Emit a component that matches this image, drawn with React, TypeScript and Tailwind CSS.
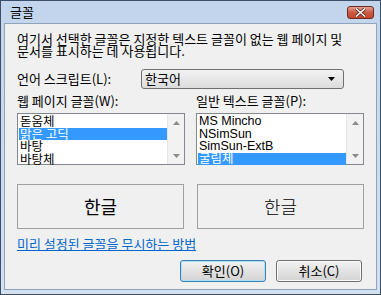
import React from "react";

const KR = { fontFamily: '"Noto Sans CJK KR", "Liberation Sans", sans-serif' };

function ScrollCol() {
  return (
    <div className="flex w-[17px] flex-col justify-between bg-[#f2f2f2] border-l border-[#e6e6e6]">
      <div className="flex h-[17px] items-center justify-center">
        <svg width="7" height="4" viewBox="0 0 7 4"><path d="M3.5 0 L7 4 L0 4 Z" fill="#8a8a8a" /></svg>
      </div>
      <div className="flex h-[17px] items-center justify-center">
        <svg width="7" height="4" viewBox="0 0 7 4"><path d="M0 0 L7 0 L3.5 4 Z" fill="#8a8a8a" /></svg>
      </div>
    </div>
  );
}

function ListBox({ items, selected }: { items: string[]; selected: number }) {
  return (
    <div className="flex h-[52px] w-[168px] border border-[#828790] bg-white">
      <div className="flex flex-1 flex-col pl-[1px] pt-[1px]">
        {items.map((t, i) => (
          <div
            key={t}
            className={
              "h-[12.5px] pl-[1px] text-[12.5px] leading-[12.5px] " +
              (i === selected ? "bg-[#3399ff] text-white" : "text-black")
            }
          >
            {t}
          </div>
        ))}
      </div>
      <ScrollCol />
    </div>
  );
}

export default function App() {
  return (
    <div
      className="flex h-[295px] w-[381px] flex-col overflow-hidden border border-[#3b4f66] bg-gradient-to-b from-[#c2d5ec] to-[#d3e1f1]"
      style={KR}
    >
      {/* Title bar */}
      <div className="flex h-[22px] items-center justify-between pl-[9px] pr-[6px]">
        <span className="text-[13px] leading-[14px] text-black">글꼴</span>
        <div className="flex h-[13px] w-[27px] items-center justify-center rounded-[3px] border border-[#6d2a23] bg-gradient-to-b from-[#e3a08f] via-[#c95b45] to-[#c7452e]">
          <svg width="11" height="9" viewBox="0 0 11 9">
            <path d="M1 0.5 L5.5 4.5 L10 0.5 M1 8.5 L5.5 4.5 L10 8.5" stroke="#4a1a14" strokeWidth="3" fill="none" />
            <path d="M1 0.5 L5.5 4.5 L10 0.5 M1 8.5 L5.5 4.5 L10 8.5" stroke="#ffffff" strokeWidth="1.6" fill="none" />
          </svg>
        </div>
      </div>

      {/* Client area */}
      <div className="mx-[3px] mb-[4px] flex flex-1 flex-col border border-[#8ea4bd] bg-[#f0f0f0] px-[12px] text-[13px] text-black">
        <p className="mt-[9px] leading-[12px]">
          여기서 선택한 글꼴은 지정한 텍스트 글꼴이 없는 웹 페이지 및
          <br />
          문서를 표시하는 데 사용됩니다.
        </p>

        <div className="mt-[12px] flex items-center">
          <span className="w-[124px] leading-[14px]">언어 스크립트(L):</span>
          <div className="flex h-[20px] w-[203px] items-center justify-between rounded-[3px] border border-[#707070] bg-gradient-to-b from-[#f2f2f2] to-[#dcdcdc] pl-[3px] pr-[8px]">
            <span className="leading-[14px]">한국어</span>
            <svg width="7" height="4" viewBox="0 0 7 4"><path d="M0 0 L7 0 L3.5 4 Z" fill="#000" /></svg>
          </div>
        </div>

        <div className="mt-[5px] flex">
          <div className="flex w-[181px] flex-col">
            <span className="leading-[14px]">웹 페이지 글꼴(W):</span>
            <div className="mt-[5px]">
              <ListBox items={["돋움체", "맑은 고딕", "바탕", "바탕체"]} selected={1} />
            </div>
          </div>
          <div className="flex flex-col">
            <span className="leading-[14px]">일반 텍스트 글꼴(P):</span>
            <div className="mt-[5px]" style={{ fontFamily: '"Liberation Sans", "Noto Sans CJK KR", sans-serif' }}>
              <ListBox items={["MS Mincho", "NSimSun", "SimSun-ExtB", "굴림체"]} selected={3} />
            </div>
          </div>
        </div>

        <div className="mt-[19px] flex">
          <div className="flex h-[45px] w-[168px] items-center justify-center border border-[#a0a0a0] text-[18px]">
            한글
          </div>
          <div className="ml-[13px] flex h-[45px] w-[168px] items-center justify-center border border-[#a0a0a0] text-[18px] font-light">
            한글
          </div>
        </div>

        <a className="mt-[8px] self-start leading-[14px] text-[#0066cc] underline">미리 설정된 글꼴을 무시하는 방법</a>

        <div className="mt-[9px] flex justify-end gap-[10px] pr-[2px]">
          <div className="flex h-[22px] w-[86px] items-center justify-center rounded-[3px] border border-[#3c7fb1] bg-gradient-to-b from-[#f2f2f2] to-[#d4d4d4] leading-[14px] shadow-[inset_0_0_0_1px_#a9e1f8]">
            확인(O)
          </div>
          <div className="flex h-[22px] w-[86px] items-center justify-center rounded-[3px] border border-[#707070] bg-gradient-to-b from-[#f2f2f2] to-[#d4d4d4] leading-[14px] shadow-[inset_0_0_0_1px_#fbfbfb]">
            취소(C)
          </div>
        </div>
      </div>
    </div>
  );
}
